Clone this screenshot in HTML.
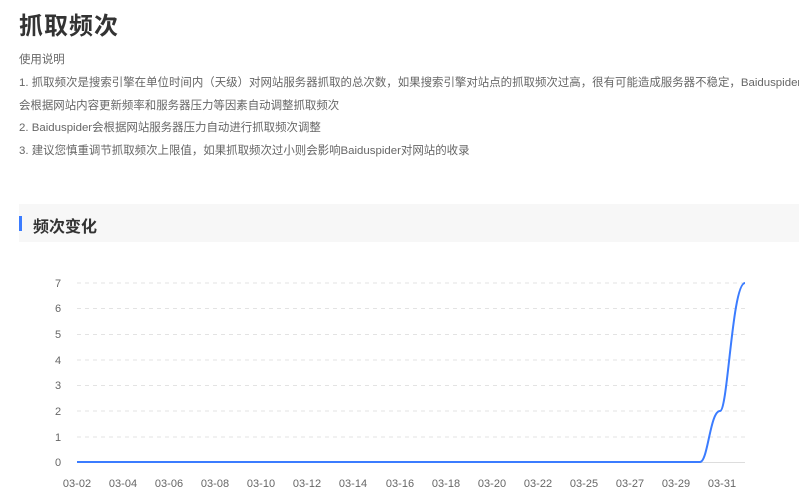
<!DOCTYPE html>
<html><head><meta charset="utf-8"><style>
html,body{margin:0;width:799px;height:501px;overflow:hidden}
body{background:#fff;font-family:"Liberation Sans","Noto Sans CJK SC",sans-serif;position:relative}
.t{position:absolute;left:19px;top:6px;font-size:24px;font-weight:bold;color:#333;letter-spacing:1px}
.l{position:absolute;left:19px;width:780px;overflow:hidden;font-size:11.45px;color:#666;white-space:nowrap;line-height:16px}
.sec{position:absolute;left:19px;top:204px;width:780px;height:38px;background:#f7f7f7}
.bar{position:absolute;left:0;top:12px;width:3px;height:15px;background:#3b7cff}
.st{position:absolute;left:14px;top:9px;font-size:16px;font-weight:bold;color:#333}
svg{position:absolute;left:0;top:0}
</style></head><body>
<div class="t">抓取频次</div>
<div class="l" style="top:52px">使用说明</div>
<div class="l" style="top:75px">1. 抓取频次是搜索引擎在单位时间内（天级）对网站服务器抓取的总次数，如果搜索引擎对站点的抓取频次过高，很有可能造成服务器不稳定，Baiduspider</div>
<div class="l" style="top:98px">会根据网站内容更新频率和服务器压力等因素自动调整抓取频次</div>
<div class="l" style="top:120px">2. Baiduspider会根据网站服务器压力自动进行抓取频次调整</div>
<div class="l" style="top:143px">3. 建议您慎重调节抓取频次上限值，如果抓取频次过小则会影响Baiduspider对网站的收录</div>
<div class="sec"><div class="bar"></div><div class="st">频次变化</div></div>
<svg width="799" height="501" font-family="Liberation Sans, sans-serif" font-size="11" fill="#666">
<g stroke="#e3e3e3" stroke-dasharray="4,4">
<line x1="77" x2="745" y1="283" y2="283"/><line x1="77" x2="745" y1="308.5" y2="308.5"/><line x1="77" x2="745" y1="334.5" y2="334.5"/><line x1="77" x2="745" y1="360" y2="360"/><line x1="77" x2="745" y1="385.5" y2="385.5"/><line x1="77" x2="745" y1="411" y2="411"/><line x1="77" x2="745" y1="437" y2="437"/>
</g>
<line x1="77" x2="745" y1="462.5" y2="462.5" stroke="#ddd"/>
<g text-anchor="middle">
<text x="58" y="287">7</text><text x="58" y="312">6</text><text x="58" y="338">5</text><text x="58" y="364">4</text><text x="58" y="389">3</text><text x="58" y="415">2</text><text x="58" y="441">1</text><text x="58" y="466">0</text>
<text x="77" y="487">03-02</text><text x="123" y="487">03-04</text><text x="169" y="487">03-06</text><text x="215" y="487">03-08</text><text x="261" y="487">03-10</text><text x="307" y="487">03-12</text><text x="353" y="487">03-14</text><text x="400" y="487">03-16</text><text x="446" y="487">03-18</text><text x="492" y="487">03-20</text><text x="538" y="487">03-22</text><text x="584" y="487">03-25</text><text x="630" y="487">03-27</text><text x="676" y="487">03-29</text><text x="722" y="487">03-31</text>
</g>
<path d="M77 462 L700 462 C708 462 710 411 720 411 C728 411 732 283 745 283" fill="none" stroke="#3b7cff" stroke-width="2"/>
</svg>
</body></html>
